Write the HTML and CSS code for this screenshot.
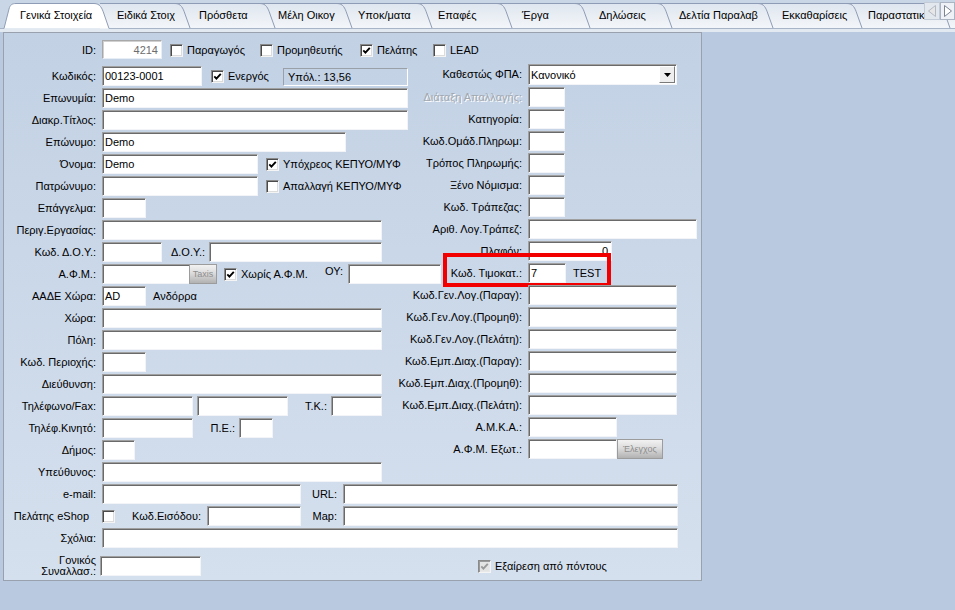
FILE: index.html
```html
<!DOCTYPE html>
<html lang="el">
<head>
<meta charset="utf-8">
<title>Πελάτης - Γενικά Στοιχεία</title>
<link rel="stylesheet" href="styles.css">
</head>
<body>
<div class="tabbar">
  <svg class="tabart" width="955" height="29" viewBox="0 0 955 29">
    <defs>
      <linearGradient id="tg" x1="0" y1="0" x2="0" y2="1">
        <stop offset="0" stop-color="#dfe6ef"/>
        <stop offset="1" stop-color="#f3f6f9"/>
      </linearGradient>
    </defs>
    <rect x="0" y="0" width="955" height="29" fill="#c9d6e6"/>
    <rect x="100" y="3.5" width="855" height="25" fill="url(#tg)"/>
    <path d="M100 3.5 H955" stroke="#8e9cb5" fill="none"/>
    <g stroke="#8e9cb5" fill="none">
      <path d="M175 3.5 C181 3.5 183 8 185 14 L190 28"/>
      <path d="M260 3.5 C266 3.5 268 8 270 14 L275 28"/>
      <path d="M337 3.5 C343 3.5 345 8 347 14 L352 28"/>
      <path d="M417 3.5 C423 3.5 425 8 427 14 L432 28"/>
      <path d="M497 3.5 C503 3.5 505 8 507 14 L512 28"/>
      <path d="M575 3.5 C581 3.5 583 8 585 14 L590 28"/>
      <path d="M657 3.5 C663 3.5 665 8 667 14 L672 28"/>
      <path d="M758 3.5 C764 3.5 766 8 768 14 L773 28"/>
      <path d="M847 3.5 C853 3.5 855 8 857 14 L862 28"/>
      <path d="M935 3.5 C941 3.5 943 8 945 14 L950 28"/>
    </g>
    <path d="M0 28.5 H4 M109 28.5 H955" stroke="#a7b4c7"/>
    <path d="M4 28.5 L9 9 C10 5 12 3.5 16 3.5 L94 3.5 C100 3.5 102 8 104 14 L109 28.5" fill="#ffffff" stroke="#8e9cb5"/>
  </svg>
  <div class="tabs">
    <div class="tab t1">Γενικά Στοιχεία</div>
    <div class="tab t2">Ειδικά Στοιχ</div>
    <div class="tab t3">Πρόσθετα</div>
    <div class="tab t4">Μέλη Οικογ</div>
    <div class="tab t5">Υποκ/ματα</div>
    <div class="tab t6">Επαφές</div>
    <div class="tab t7">Έργα</div>
    <div class="tab t8">Δηλώσεις</div>
    <div class="tab t9">Δελτία Παραλαβ</div>
    <div class="tab t10">Εκκαθαρίσεις</div>
    <div class="tab t11">Παραστατικά</div>
  </div>
  <div class="scroller">
    <svg width="31" height="18" viewBox="0 0 31 18">
      <rect x="0.5" y="0.5" width="15" height="17" fill="#e3e8ef" stroke="#c3cbd6"/>
      <path d="M11.5 3.5 L4.5 9 L11.5 14.5 Z" fill="#e6e6e6" stroke="#b4bac4"/>
      <rect x="16.5" y="0.5" width="14" height="17" fill="#eef2f6" stroke="#aab4c2"/>
      <path d="M20.5 3.5 L27.5 9 L20.5 14.5 Z" fill="#ffffff" stroke="#7c8594"/>
    </svg>
  </div>
</div>

<div class="page">
  <div class="panel">

    <div class="row row-id">
      <div class="lbl">ID:</div>
      <div class="f ro w60">4214</div>
      <div class="cb g90 ml8"><span class="box"></span><span class="txt">Παραγωγός</span></div>
      <div class="cb g100"><span class="box"></span><span class="txt">Προμηθευτής</span></div>
      <div class="cb g73"><span class="box"><svg viewBox="0 0 11 11" width="11" height="11"><path d="M2.3 5.4 L4.4 7.6 L8.8 2.8" fill="none" stroke="#000" stroke-width="1.9"/></svg></span><span class="txt">Πελάτης</span></div>
      <div class="cb"><span class="box"></span><span class="txt">LEAD</span></div>
    </div>

    <div class="row">
      <div class="left">
        <div class="lbl">Κωδικός:</div>
        <div class="f w100">00123-0001</div>
        <div class="cb g72 ml9"><span class="box"><svg viewBox="0 0 11 11" width="11" height="11"><path d="M2.3 5.4 L4.4 7.6 L8.8 2.8" fill="none" stroke="#000" stroke-width="1.9"/></svg></span><span class="txt">Ενεργός</span></div>
        <div class="balance">Υπόλ.: 13,56</div>
      </div>
      <div class="right up2">
        <div class="rlbl">Καθεστώς ΦΠΑ:</div>
        <div class="sel"><span>Κανονικό</span><span class="drop"><svg viewBox="0 0 7 4" width="7" height="4"><path d="M0 0 H7 L3.5 4 Z" fill="#000"/></svg></span></div>
      </div>
    </div>

    <div class="row">
      <div class="left">
        <div class="lbl">Επωνυμία:</div>
        <div class="f w306">Demo</div>
      </div>
      <div class="right">
        <div class="rlbl dis">Διάταξη Απαλλαγής:</div>
        <div class="f w37"></div>
      </div>
    </div>

    <div class="row">
      <div class="left">
        <div class="lbl">Διακρ.Τίτλος:</div>
        <div class="f w306"></div>
      </div>
      <div class="right">
        <div class="rlbl">Κατηγορία:</div>
        <div class="f w37"></div>
      </div>
    </div>

    <div class="row">
      <div class="left">
        <div class="lbl">Επώνυμο:</div>
        <div class="f w244">Demo</div>
      </div>
      <div class="right">
        <div class="rlbl">Κωδ.Ομάδ.Πληρωμ:</div>
        <div class="f w37"></div>
      </div>
    </div>

    <div class="row">
      <div class="left">
        <div class="lbl">Όνομα:</div>
        <div class="f w156">Demo</div>
        <div class="cb ml8"><span class="box"><svg viewBox="0 0 11 11" width="11" height="11"><path d="M2.3 5.4 L4.4 7.6 L8.8 2.8" fill="none" stroke="#000" stroke-width="1.9"/></svg></span><span class="txt">Υπόχρεος ΚΕΠΥΟ/ΜΥΦ</span></div>
      </div>
      <div class="right">
        <div class="rlbl">Τρόπος Πληρωμής:</div>
        <div class="f w37"></div>
      </div>
    </div>

    <div class="row">
      <div class="left">
        <div class="lbl">Πατρώνυμο:</div>
        <div class="f w156"></div>
        <div class="cb ml8"><span class="box"></span><span class="txt">Απαλλαγή ΚΕΠΥΟ/ΜΥΦ</span></div>
      </div>
      <div class="right">
        <div class="rlbl">Ξένο Νόμισμα:</div>
        <div class="f w37"></div>
      </div>
    </div>

    <div class="row">
      <div class="left">
        <div class="lbl">Επάγγελμα:</div>
        <div class="f w44"></div>
      </div>
      <div class="right">
        <div class="rlbl">Κωδ. Τράπεζας:</div>
        <div class="f w37"></div>
      </div>
    </div>

    <div class="row">
      <div class="left">
        <div class="lbl">Περιγ.Εργασίας:</div>
        <div class="f w280"></div>
      </div>
      <div class="right">
        <div class="rlbl">Αριθ. Λογ.Τράπεζ:</div>
        <div class="f w169"></div>
      </div>
    </div>

    <div class="row">
      <div class="left">
        <div class="lbl">Κωδ. Δ.Ο.Υ.:</div>
        <div class="f w60"></div>
        <div class="ilbl w43">Δ.Ο.Υ.:</div>
        <div class="f w173"></div>
      </div>
      <div class="right">
        <div class="rlbl">Πλαφόν:</div>
        <div class="f w84 num">0</div>
      </div>
    </div>

    <div class="row">
      <div class="left">
        <div class="lbl">Α.Φ.Μ.:</div>
        <div class="f w88"></div>
        <div class="btn taxis">Taxis</div>
        <div class="cb g101 ml7"><span class="box"><svg viewBox="0 0 11 11" width="11" height="11"><path d="M2.3 5.4 L4.4 7.6 L8.8 2.8" fill="none" stroke="#000" stroke-width="1.9"/></svg></span><span class="txt">Χωρίς Α.Φ.Μ.</span></div>
        <div class="ou">ΟΥ:</div>
        <div class="f w93"></div>
      </div>
      <div class="right">
        <div class="rlbl">Κωδ. Τιμοκατ.:</div>
        <div class="f w38">7</div>
        <div class="plain ml7">TEST</div>
        <span class="redbox"></span>
      </div>
    </div>

    <div class="row">
      <div class="left">
        <div class="lbl">ΑΑΔΕ Χώρα:</div>
        <div class="f w44">AD</div>
        <div class="plain ml7">Ανδόρρα</div>
      </div>
      <div class="right">
        <div class="rlbl">Κωδ.Γεν.Λογ.(Παραγ):</div>
        <div class="f w149"></div>
      </div>
    </div>

    <div class="row">
      <div class="left">
        <div class="lbl">Χώρα:</div>
        <div class="f w280"></div>
      </div>
      <div class="right">
        <div class="rlbl">Κωδ.Γεν.Λογ.(Προμηθ):</div>
        <div class="f w149"></div>
      </div>
    </div>

    <div class="row">
      <div class="left">
        <div class="lbl">Πόλη:</div>
        <div class="f w280"></div>
      </div>
      <div class="right">
        <div class="rlbl">Κωδ.Γεν.Λογ.(Πελάτη):</div>
        <div class="f w149"></div>
      </div>
    </div>

    <div class="row">
      <div class="left">
        <div class="lbl">Κωδ. Περιοχής:</div>
        <div class="f w44"></div>
      </div>
      <div class="right">
        <div class="rlbl">Κωδ.Εμπ.Διαχ.(Παραγ):</div>
        <div class="f w149"></div>
      </div>
    </div>

    <div class="row">
      <div class="left">
        <div class="lbl">Διεύθυνση:</div>
        <div class="f w280"></div>
      </div>
      <div class="right">
        <div class="rlbl">Κωδ.Εμπ.Διαχ.(Προμηθ):</div>
        <div class="f w149"></div>
      </div>
    </div>

    <div class="row">
      <div class="left">
        <div class="lbl">Τηλέφωνο/Fax:</div>
        <div class="f w91"></div>
        <div class="f w91 ml4"></div>
        <div class="ilbl w39">Τ.Κ.:</div>
        <div class="f w51"></div>
      </div>
      <div class="right">
        <div class="rlbl">Κωδ.Εμπ.Διαχ.(Πελάτη):</div>
        <div class="f w149"></div>
      </div>
    </div>

    <div class="row">
      <div class="left">
        <div class="lbl">Τηλέφ.Κινητό:</div>
        <div class="f w91"></div>
        <div class="ilbl w42">Π.Ε.:</div>
        <div class="f w34"></div>
      </div>
      <div class="right">
        <div class="rlbl">Α.Μ.Κ.Α.:</div>
        <div class="f w89"></div>
      </div>
    </div>

    <div class="row">
      <div class="left">
        <div class="lbl">Δήμος:</div>
        <div class="f w33"></div>
      </div>
      <div class="right">
        <div class="rlbl">Α.Φ.Μ. Εξωτ.:</div>
        <div class="f w89"></div>
        <div class="btn check">Έλεγχος</div>
      </div>
    </div>

    <div class="row">
      <div class="lbl">Υπεύθυνος:</div>
      <div class="f w280"></div>
    </div>

    <div class="row">
      <div class="lbl">e-mail:</div>
      <div class="f w199"></div>
      <div class="ilbl w36 gap6">URL:</div>
      <div class="f w335"></div>
    </div>

    <div class="row">
      <div class="lbl nocolon">Πελάτης eShop</div>
      <div class="cb"><span class="box"></span></div>
      <div class="ilbl w86 gap6">Κωδ.Εισόδου:</div>
      <div class="f w94"></div>
      <div class="ilbl w36 gap6">Map:</div>
      <div class="f w335"></div>
    </div>

    <div class="row">
      <div class="lbl">Σχόλια:</div>
      <div class="f w576"></div>
    </div>

    <div class="row row-last">
      <div class="lbl two">Γονικός<br>Συναλλασ.:</div>
      <div class="f w101"></div>
      <div class="cb disabled ml277"><span class="box"><svg viewBox="0 0 11 11" width="11" height="11"><path d="M2.3 5.4 L4.4 7.6 L8.8 2.8" fill="none" stroke="#9a9a9a" stroke-width="1.9"/></svg></span><span class="txt">Εξαίρεση από πόντους</span></div>
    </div>

  </div>
</div>
</body>
</html>
```

FILE: styles.css
```css
html, body {
  margin: 0;
  padding: 0;
}

body {
  width: 955px;
  height: 610px;
  overflow: hidden;
  background: #b9c9df;
  font-family: "Liberation Sans", Arial, sans-serif;
  font-size: 11px;
  color: #000;
}

/* ---------- tab strip ---------- */
.tabbar {
  position: relative;
  height: 29px;
  overflow: hidden;
}

.tabart {
  position: absolute;
  left: 0;
  top: 0;
}

.tabs {
  position: relative;
  display: flex;
  padding-left: 20px;
  padding-top: 3px;
  height: 26px;
  box-sizing: border-box;
}

.tab {
  flex: none;
  line-height: 25px;
  white-space: nowrap;
  color: #000;
}

.t1 { width: 97px; }
.t2 { width: 82px; }
.t3 { width: 79px; }
.t4 { width: 80px; }
.t5 { width: 80px; }
.t6 { width: 84px; }
.t7 { width: 77px; }
.t8 { width: 80px; }
.t9 { width: 103px; }
.t10 { width: 86px; }
.t11 { width: 120px; }

.scroller {
  position: absolute;
  right: 0;
  top: 2px;
  width: 31px;
  height: 18px;
  display: flex;
}

/* ---------- page / panel ---------- */
.page {
  border-top: 3px solid #e3e9f1;
}

.panel {
  margin-left: 3px;
  width: 697px;
  border: 1px solid #98a1ad;
  background: linear-gradient(#c2d1e4, #d5e0ee);
  padding: 7px 0 2px 0;
}

.row {
  display: flex;
  align-items: flex-start;
  height: 22px;
}

.row-id {
  height: 26px;
}

.row-last {
  margin-top: 6px;
}

.left {
  display: flex;
  align-items: flex-start;
  width: 396px;
  flex: none;
}

.right {
  position: relative;
  display: flex;
  align-items: flex-start;
  margin-top: -1px;
}

.right.up2 {
  margin-top: -2px;
}

.lbl {
  flex: none;
  width: 92px;
  margin-right: 6px;
  text-align: right;
  line-height: 20px;
  white-space: nowrap;
}

.lbl.nocolon {
  width: 85px;
  padding-right: 7px;
  margin-right: 6px;
}

.lbl.two {
  line-height: 11px;
  margin-right: 4px;
  margin-top: -1px;
}

.rlbl {
  flex: none;
  width: 122px;
  margin-right: 6px;
  display: flex;
  justify-content: flex-end;
  line-height: 20px;
  white-space: nowrap;
}

.rlbl.dis {
  color: #a2a8b0;
  text-shadow: 1px 1px 0 #ffffff;
}

.ilbl {
  flex: none;
  display: flex;
  justify-content: flex-end;
  line-height: 20px;
  white-space: nowrap;
  margin-right: 4px;
}

.ilbl.gap6 {
  margin-right: 6px;
}

.ou {
  flex: none;
  width: 19px;
  margin-right: 4px;
  line-height: 14px;
  white-space: nowrap;
}

.plain {
  flex: none;
  line-height: 20px;
  white-space: nowrap;
}

/* ---------- fields ---------- */
.f {
  flex: none;
  box-sizing: border-box;
  height: 20px;
  background: #ffffff;
  border: 1px solid;
  border-color: #a0a0a0 #f2f4f7 #f2f4f7 #a0a0a0;
  box-shadow: inset 1px 1px 0 #6a6a6a;
  padding: 0 2px 0 2px;
  line-height: 19px;
  white-space: nowrap;
  overflow: hidden;
}

.f.ro {
  height: 19px;
  color: #6d6d6d;
  text-align: right;
  padding-right: 3px;
  border-color: #a8a8a8 #e8eef5 #e8eef5 #a8a8a8;
  box-shadow: inset 1px 1px 0 #d0d0d0;
  line-height: 18px;
}

.f.num {
  text-align: right;
  padding-right: 3px;
}

.balance {
  flex: none;
  box-sizing: border-box;
  width: 125px;
  height: 18px;
  margin-top: 2px;
  border: 1px solid;
  border-color: #9aa0a8 #ffffff #ffffff #9aa0a8;
  padding-left: 4px;
  line-height: 16px;
  white-space: nowrap;
}

.sel {
  flex: none;
  box-sizing: border-box;
  width: 149px;
  height: 21px;
  background: #ffffff;
  border: 1px solid;
  border-color: #a0a0a0 #f2f4f7 #f2f4f7 #a0a0a0;
  box-shadow: inset 1px 1px 0 #6a6a6a;
  display: flex;
  justify-content: space-between;
  align-items: center;
  padding-left: 2px;
  padding-right: 1px;
}

.drop {
  box-sizing: border-box;
  width: 16px;
  height: 17px;
  background: #eeeeee;
  border: 1px solid;
  border-color: #ffffff #7a7a7a #7a7a7a #ffffff;
  display: flex;
  align-items: center;
  justify-content: center;
}

.btn {
  flex: none;
  box-sizing: border-box;
  height: 20px;
  border: 1px solid #9c9c9c;
  background: linear-gradient(#f2f2f2, #dcdcdc 45%, #b2b2b2);
  color: #8e8e8e;
  font-size: 9px;
  line-height: 18px;
  text-align: center;
  white-space: nowrap;
}

.taxis {
  width: 28px;
  margin-left: -1px;
}

.check {
  width: 46px;
  margin-left: 0;
}

/* ---------- checkboxes ---------- */
.cb {
  flex: none;
  display: flex;
  align-items: center;
  height: 20px;
}

.box {
  flex: none;
  box-sizing: border-box;
  width: 13px;
  height: 13px;
  background: #ffffff;
  border: 1px solid;
  border-color: #8a8a8a #f4f4f4 #f4f4f4 #8a8a8a;
  box-shadow: inset 1px 1px 0 #4a4a4a, inset -1px -1px 0 #dcdcdc;
  display: flex;
  align-items: center;
  justify-content: center;
}

.box svg {
  display: block;
}

.cb .txt {
  margin-left: 4px;
  white-space: nowrap;
}

.cb.disabled .box {
  background: #e4e4e4;
  box-shadow: inset 1px 1px 0 #9a9a9a, inset -1px -1px 0 #e8e8e8;
}

/* ---------- overlay annotation ---------- */
.redbox {
  position: absolute;
  left: 43px;
  top: -10px;
  width: 168px;
  height: 34px;
  box-sizing: border-box;
  border: 4px solid #f20000;
}

/* ---------- widths & spacing ---------- */
.w33 { width: 33px; }
.w34 { width: 34px; }
.w36 { width: 36px; }
.w37 { width: 37px; }
.w38 { width: 38px; }
.w39 { width: 39px; }
.w42 { width: 42px; }
.w43 { width: 43px; }
.w44 { width: 44px; }
.w51 { width: 51px; }
.w60 { width: 60px; }
.w84 { width: 84px; }
.w86 { width: 86px; }
.w88 { width: 88px; }
.w89 { width: 89px; }
.w91 { width: 91px; }
.w93 { width: 93px; }
.w94 { width: 94px; }
.w100 { width: 100px; }
.w101 { width: 101px; }
.w149 { width: 149px; }
.w156 { width: 156px; }
.w169 { width: 169px; }
.w173 { width: 173px; }
.w199 { width: 199px; }
.w244 { width: 244px; }
.w280 { width: 280px; }
.w306 { width: 306px; }
.w335 { width: 335px; }
.w576 { width: 576px; }

.g72 { width: 72px; }
.g73 { width: 73px; }
.g90 { width: 90px; }
.g100 { width: 100px; }
.g101 { width: 101px; }

.ml4 { margin-left: 4px; }
.ml7 { margin-left: 7px; }
.ml8 { margin-left: 8px; }
.ml9 { margin-left: 9px; }
.ml277 { margin-left: 277px; }
```
